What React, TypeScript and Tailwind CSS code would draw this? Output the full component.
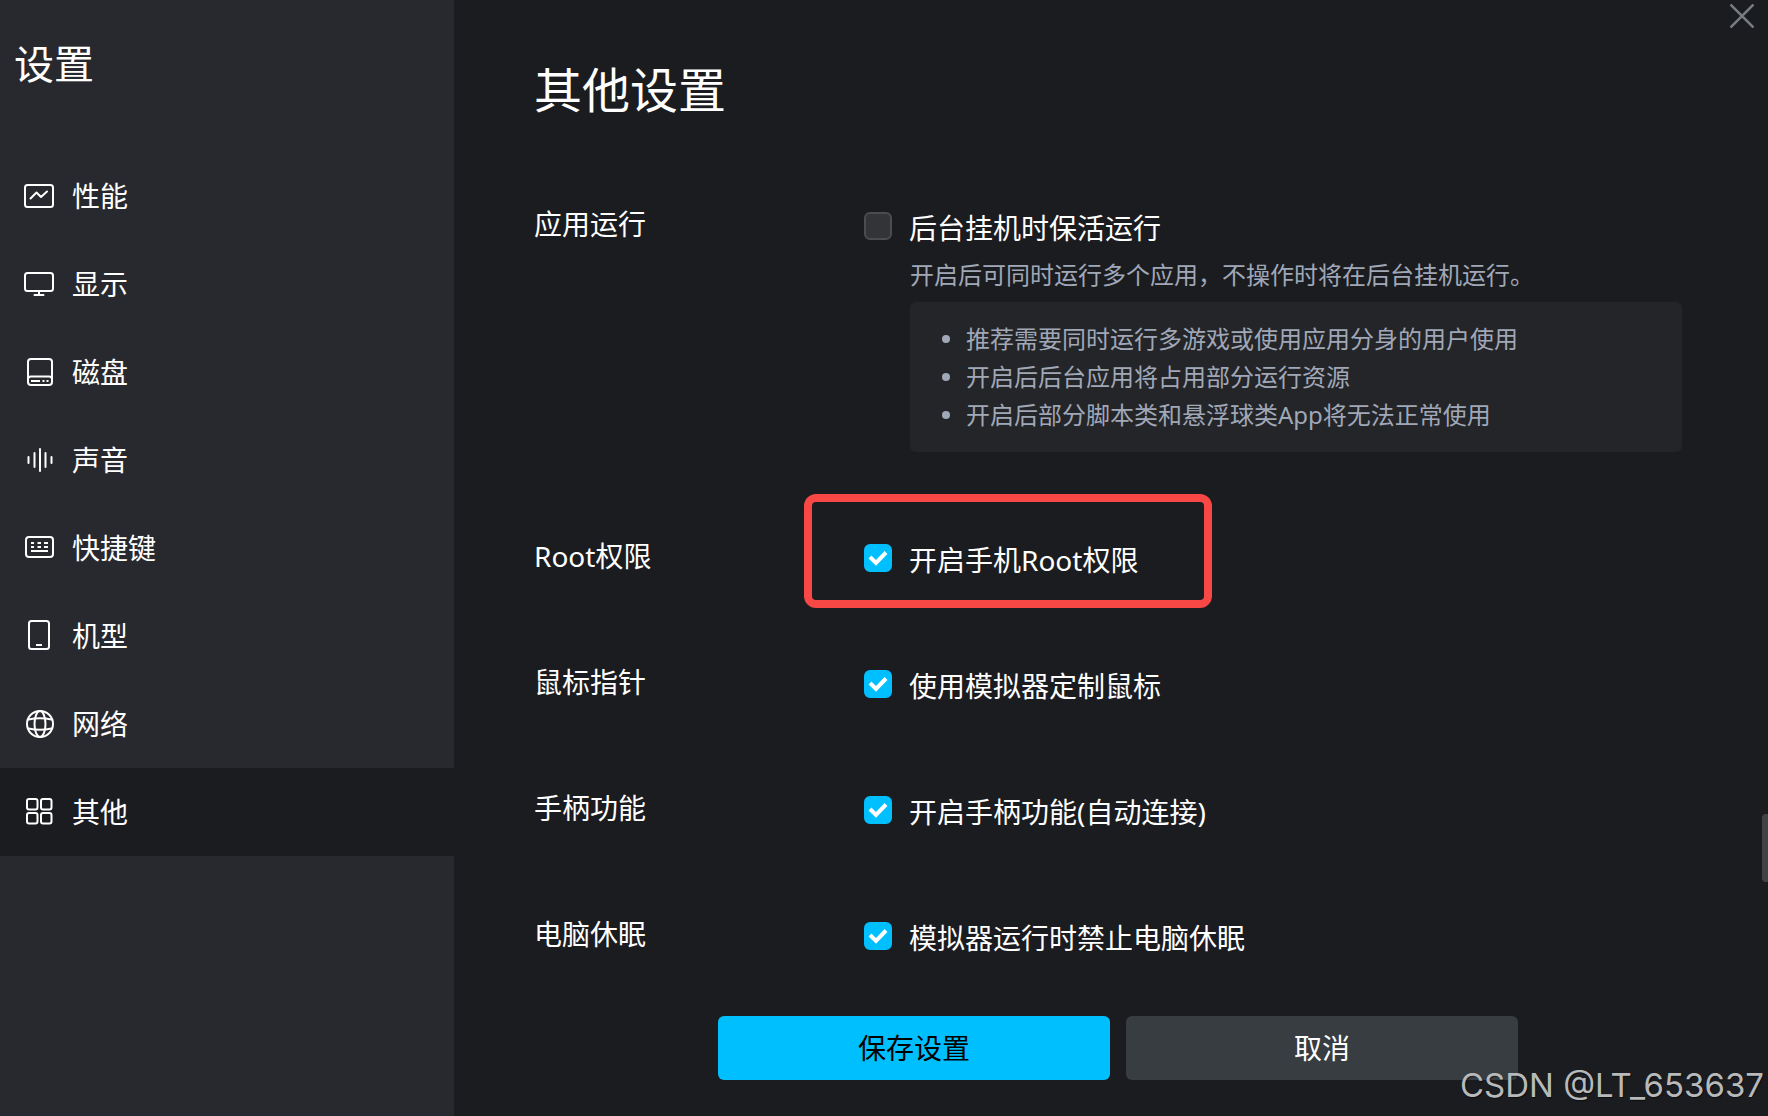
import React from "react";

const navItems = [
  {
    label: "性能",
    icon: (
      <>
        <rect x="2" y="5" width="28" height="22" rx="2.5" />
        <path d="M7.5 18.5l6-6 4.5 4.5 6-5.5" />
      </>
    ),
  },
  {
    label: "显示",
    icon: (
      <>
        <rect x="2" y="5" width="28" height="18" rx="2.5" />
        <path d="M16 23v4M11.5 27h9" />
      </>
    ),
  },
  {
    label: "磁盘",
    icon: (
      <>
        <rect x="5" y="3" width="24" height="26" rx="3" />
        <path d="M5 23q0-2.500 3-2.500h18q3 0 3 2.500" />
        <path d="M8 25h9M19.500 25h2M23.500 25h2" strokeLinecap="butt" />
      </>
    ),
  },
  {
    label: "声音",
    icon: <path d="M5.500 13v6M11.500 9v14M17 5v22M22.500 9v14M28.500 13v6" />,
  },
  {
    label: "快捷键",
    icon: (
      <>
        <rect x="3" y="5" width="27" height="20" rx="3" />
        <path d="M8 11h3M14.500 11h3.500M21 11h4M8 15h3M14.500 15h3.500M21 15h4M8 19h17" strokeLinecap="butt" />
      </>
    ),
  },
  {
    label: "机型",
    icon: (
      <>
        <rect x="6" y="1" width="20" height="28" rx="2.5" />
        <path d="M13 25h6" strokeLinecap="butt" />
      </>
    ),
  },
  {
    label: "网络",
    icon: (
      <>
        <circle cx="17" cy="16" r="13" />
        <ellipse cx="17" cy="16" rx="5.500" ry="13" />
        <path d="M5.500 11.500q11.500-2.500 23 0M5.500 20.500q11.500 2.500 23 0" />
      </>
    ),
  },
  {
    label: "其他",
    active: true,
    icon: (
      <>
        <rect x="4" y="3" width="10.500" height="10.500" rx="2" />
        <rect x="18" y="3" width="10.500" height="10.500" rx="2" />
        <rect x="4" y="17" width="10.500" height="10.500" rx="2" />
        <rect x="18" y="17" width="10.500" height="10.500" rx="2" />
      </>
    ),
  },
];

const tips = [
  "推荐需要同时运行多游戏或使用应用分身的用户使用",
  "开启后后台应用将占用部分运行资源",
  "开启后部分脚本类和悬浮球类App将无法正常使用",
];

const options = [
  { id: "root", title: "Root权限", label: "开启手机Root权限", highlight: true },
  { id: "mouse", title: "鼠标指针", label: "使用模拟器定制鼠标" },
  { id: "gamepad", title: "手柄功能", label: "开启手柄功能(自动连接)" },
  { id: "sleep", title: "电脑休眠", label: "模拟器运行时禁止电脑休眠" },
];

function Option({ id, label, checked = false }: { id: string; label: string; checked?: boolean }) {
  return (
    <label htmlFor={id} className="inline-flex items-start gap-[17px] pt-0.5">
      <span className="grid shrink-0">
        <input
          id={id}
          type="checkbox"
          defaultChecked={checked}
          className="peer col-start-1 row-start-1 size-7 appearance-none rounded-md border-2 border-[#4b4c50] bg-[#333438] checked:border-[#00bfff] checked:bg-[#00bfff]"
        />
        <svg
          viewBox="0 0 28 28"
          className="pointer-events-none invisible col-start-1 row-start-1 size-7 fill-none stroke-white stroke-4 peer-checked:visible"
        >
          <path d="M6 13l6 6L22 8.500" />
        </svg>
      </span>
      <span className="pt-0.5">{label}</span>
    </label>
  );
}

export default function App() {
  return (
    <div className="relative flex min-h-screen overflow-hidden bg-[#1b1c20] font-['Noto_Sans','Noto_Sans_CJK_SC',sans-serif] text-[28px] leading-7 text-white">
      {/* Sidebar */}
      <aside className="w-[454px] shrink-0 bg-[#28292e]">
        <h1 className="px-3.5 pt-10 text-[40px] leading-[48px]">设置</h1>
        <nav className="mt-16">
          {navItems.map((item) => (
            <a
              key={item.label}
              href="#"
              className={`flex h-[88px] items-center gap-[17px] pl-[23px] ${item.active ? "bg-[#1b1c20]" : ""}`}
            >
              <svg
                viewBox="0 0 32 32"
                className="size-8 shrink-0 fill-none stroke-white stroke-2"
                strokeLinecap="round"
                strokeLinejoin="round"
              >
                {item.icon}
              </svg>
              <span>{item.label}</span>
            </a>
          ))}
        </nav>
      </aside>

      {/* Settings */}
      <main className="flex flex-1 flex-col pr-20 pb-9 pl-20">
        <h2 className="pt-[60px] text-[48px] leading-[60px]">其他设置</h2>

        <div className="mt-[90px] flex flex-col gap-[90px]">
          <section className="grid grid-cols-[330px_1fr]">
            <h3>应用运行</h3>
            <div className="pr-1.5">
              <Option id="keep-alive" label="后台挂机时保活运行" />
              <div className="mt-[13px] pl-[46px] text-2xl leading-[38px] text-[#a0a8b8]">
                <p>开启后可同时运行多个应用，不操作时将在后台挂机运行。</p>
                <ul className="mt-2 rounded-md bg-[#242528] py-[18px] pl-8">
                  {tips.map((tip) => (
                    <li key={tip} className="flex items-center gap-4">
                      <span className="size-2 rounded-full bg-[#a0a8b8]" />
                      {tip}
                    </li>
                  ))}
                </ul>
              </div>
            </div>
          </section>

          {options.map((option) => (
            <section key={option.id} className="grid min-h-9 grid-cols-[330px_1fr]">
              <h3>{option.title}</h3>
              <div className="relative">
                <Option id={option.id} label={option.label} checked />
                {option.highlight && (
                  <div className="pointer-events-none absolute -top-12 -left-[60px] h-[114px] w-[408px] rounded-xl border-8 border-[#f74845]" />
                )}
              </div>
            </section>
          ))}
        </div>

        <div className="mt-auto flex justify-center gap-4 pl-3.5">
          <button className="h-16 w-[392px] rounded-md bg-[#00bfff] text-black">保存设置</button>
          <button className="h-16 w-[392px] rounded-md bg-[#383d41]">取消</button>
        </div>
      </main>

      <button aria-label="关闭" className="absolute top-1 right-3.5">
        <svg viewBox="0 0 24 24" className="size-6 fill-none stroke-[#777d83] stroke-[2.5]">
          <path d="M0.500 0.500l23 23M23.500 0.500l-23 23" />
        </svg>
      </button>

      {/* Scrollbar thumb */}
      <div className="absolute right-0 bottom-[234px] h-[68px] w-1.5 rounded-l-sm bg-[#414245]" />

      <div className="absolute right-1 bottom-[11px] font-[Inter,sans-serif] text-[33px] leading-10 text-[#b8b9ba] [text-shadow:1px_1px_1px_#0008]">
        CSDN @LT_653637
      </div>
    </div>
  );
}
